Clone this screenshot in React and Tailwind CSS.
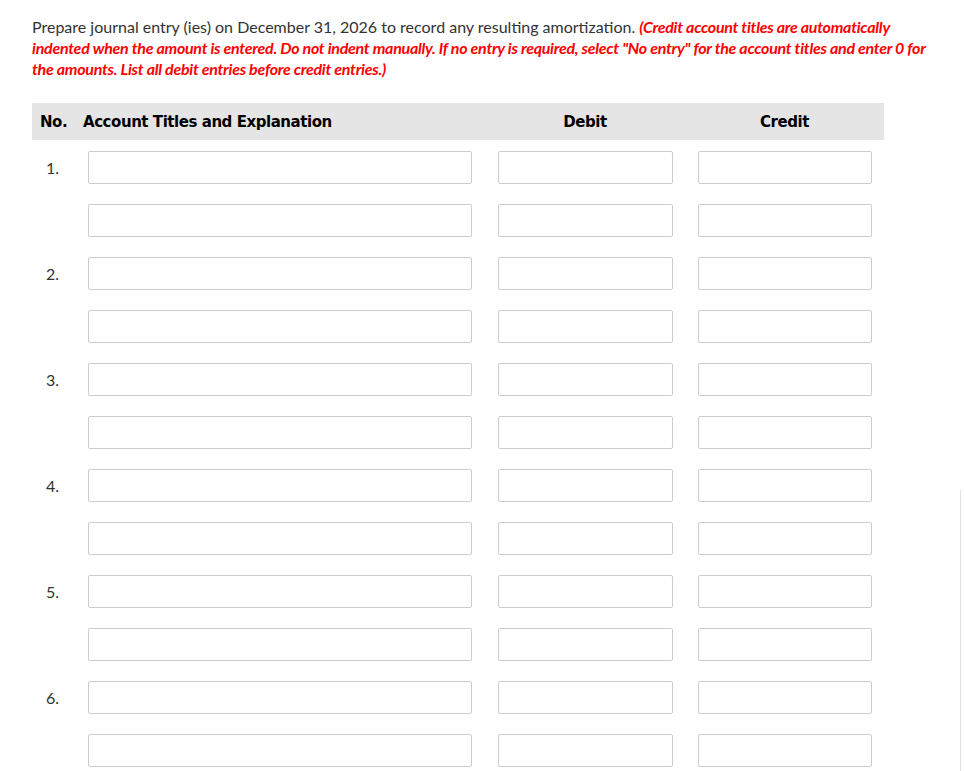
import React from "react";

const rows = [1, null, 2, null, 3, null, 4, null, 5, null, 6, null];

function Box({ w }) {
  return <div className={`h-[33px] ${w} border border-[#cccccc] rounded-[2px] bg-white`} />;
}

export default function App() {
  return (
    <div className="relative w-[964px] h-[771px] bg-white overflow-hidden" style={{ fontFamily: "Lato, 'Open Sans', sans-serif" }}>
      <div className="absolute left-[960px] top-[490px] w-px h-[300px] bg-[#e0e0e0]" />
      <div className="pl-[32px] pt-[16px] w-[932px] text-[16px] leading-[21px] text-[#333333]">
        Prepare journal entry (ies) on December 31, 2026 to record any resulting amortization.{" "}
        <span className="text-[#ff0000] font-bold italic tracking-[-0.27px]">
          (Credit account titles are automatically indented when the amount is entered. Do not indent manually. If no entry is required, select "No entry" for the account titles and enter 0 for the amounts. List all debit entries before credit entries.)
        </span>
      </div>
      <div className="ml-[32px] mt-[24px] w-[852px]">
        <div className="grid grid-cols-[51px_402px_200px_199px] h-[37px] pt-[2px] items-center bg-[#e5e5e5] font-bold text-black text-[15px] tracking-[-0.45px] font-['DejaVu_Sans',Verdana,sans-serif]">
          <div className="pl-[8px]">No.</div>
          <div>Account Titles and Explanation</div>
          <div className="text-center">Debit</div>
          <div className="text-center">Credit</div>
        </div>
        <div className="flex flex-col gap-[20px] pt-[11px]">
          {rows.map((n, i) => (
            <div key={i} className="grid grid-cols-[51px_402px_200px_199px] items-center">
              <div className="pl-[14px] text-[16px] text-[#333333]">{n ? `${n}.` : ""}</div>
              <div className="pl-[5px]"><Box w="w-[384px]" /></div>
              <div className="flex justify-center"><Box w="w-[175px]" /></div>
              <div className="flex justify-center"><Box w="w-[174px]" /></div>
            </div>
          ))}
        </div>
      </div>
    </div>
  );
}
